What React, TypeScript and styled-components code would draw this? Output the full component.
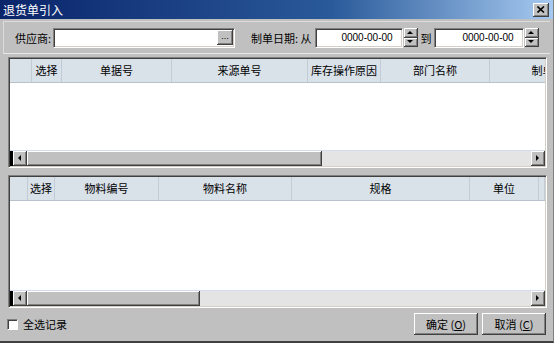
import React from 'react';
import styled, { createGlobalStyle } from 'styled-components';

const GlobalStyle = createGlobalStyle`
  html, body { margin: 0; padding: 0; background: #c0c0c0; }
  body { font-family: "Noto Sans CJK SC", "Noto Sans", sans-serif; font-size: 11px; color: #000; }
  * { box-sizing: border-box; }
`;

const Window = styled.div`
  width: 554px;
  height: 343px;
  background: #c0c0c0;
  display: flex;
  flex-direction: column;
  border-bottom: 2px solid #404040;
  border-right: 1px solid #808080;
  overflow: hidden;
`;

const TitleBar = styled.div`
  height: 19px;
  flex: none;
  display: flex;
  align-items: center;
  background: linear-gradient(to right, #0a246a 0%, #2a5a9a 60%, #a6caf0 100%);
  padding: 0 4px 0 3px;
`;

const TitleText = styled.span`
  color: #fff;
  font-size: 12px;
  line-height: 19px;
`;

const CloseBtn = styled.div`
  margin-left: auto;
  width: 16px;
  height: 14px;
  background: #c0c0c0;
  box-shadow: inset -1px -1px 0 #404040, inset 1px 1px 0 #fff, inset -2px -2px 0 #808080;
  display: flex;
  align-items: center;
  justify-content: center;
`;

const Toolbar = styled.div`
  margin: 2px 3px 0 3px;
  height: 33px;
  flex: none;
  display: flex;
  align-items: center;
  padding-left: 11px;
  border-top: 1px solid #dcdcdc;
  border-left: 1px solid #dcdcdc;
  border-bottom: 1px solid #e8e8e8;
`;

const Label = styled.span<{ $ml?: number; $mr?: number }>`
  margin-left: ${p => p.$ml ?? 0}px;
  margin-right: ${p => p.$mr ?? 2}px;
  white-space: nowrap;
  color: #000;
`;

const Field = styled.div<{ $w: number }>`
  width: ${p => p.$w}px;
  height: 20px;
  flex: none;
  background: #fff;
  border-top: 1px solid #808080;
  border-left: 1px solid #808080;
  border-right: 1px solid #fff;
  border-bottom: 1px solid #fff;
  box-shadow: inset 1px 1px 0 #404040, inset -1px -1px 0 #d4d0c8;
  display: flex;
  align-items: center;
  justify-content: flex-end;
  padding: 1px 1px 1px 2px;
`;

const DateText = styled.span`
  font-family: "Liberation Sans", Arial, sans-serif;
  font-size: 10px;
  padding-right: 8px;
`;

const EllipsisBtn = styled.div`
  width: 16px;
  height: 15px;
  background: #c0c0c0;
  box-shadow: inset -1px -1px 0 #404040, inset 1px 1px 0 #fff, inset -2px -2px 0 #808080;
  font-family: "Liberation Sans", Arial, sans-serif;
  font-size: 9px;
  line-height: 12px;
  text-align: center;
  color: #000;
`;

const Spinner = styled.div`
  width: 14px;
  height: 19px;
  margin-left: 1px;
  flex: none;
  display: flex;
  flex-direction: column;
`;

const SpinHalf = styled.div`
  flex: 1;
  background: #c0c0c0;
  box-shadow: inset -1px -1px 0 #404040, inset 1px 1px 0 #fff, inset -2px -2px 0 #808080;
  display: flex;
  align-items: center;
  justify-content: center;
`;

const Grid = styled.div<{ $h: number; $mt: number }>`
  margin: ${p => p.$mt}px 6px 0 8px;
  height: ${p => p.$h}px;
  flex: none;
  border-top: 1px solid #808080;
  border-left: 1px solid #808080;
  border-right: 1px solid #fff;
  border-bottom: 1px solid #fff;
  box-shadow: inset 1px 1px 0 #404040, inset -1px -1px 0 #d4d0c8;
  padding: 1px;
  display: flex;
  flex-direction: column;
  overflow: hidden;
`;

const HeaderRow = styled.div`
  height: 24px;
  flex: none;
  display: flex;
  background: #d9e1e9;
  border-bottom: 1px solid #b8c2cc;
  overflow: hidden;
`;

const HeaderCell = styled.div<{ $w?: number }>`
  ${p => (p.$w ? `width: ${p.$w}px; flex: none;` : 'flex: 1;')}
  border-right: 1px solid #c2ccd6;
  display: flex;
  align-items: center;
  justify-content: center;
  padding-bottom: 2px;
  white-space: nowrap;
  overflow: hidden;
  color: #000;
`;

const GridBody = styled.div`
  flex: 1;
  background: #fff;
  border-bottom: 1px solid #d6daf0;
`;

const ScrollRow = styled.div`
  height: 15px;
  flex: none;
  display: flex;
  background: #e6e6e6;
`;

const ScrollCorner = styled.div`
  width: 3px;
  background: #000;
`;

const ArrowBtn = styled.div`
  width: 14px;
  height: 15px;
  flex: none;
  background: #c0c0c0;
  box-shadow: inset -1px -1px 0 #404040, inset 1px 1px 0 #fff, inset -2px -2px 0 #808080;
  display: flex;
  align-items: center;
  justify-content: center;
`;

const Thumb = styled.div`
  height: 15px;
  flex: none;
  background: #c0c0c0;
  box-shadow: inset -1px -1px 0 #404040, inset 1px 1px 0 #fff, inset -2px -2px 0 #808080;
`;

const Track = styled.div`
  flex: 1;
  background-color: #e4e4e4;
`;

const Footer = styled.div`
  flex: 1;
  display: flex;
  align-items: flex-start;
  padding: 0 7px 0 7px;
`;

const CheckRow = styled.label`
  display: flex;
  align-items: center;
  margin-top: 8px;
  gap: 5px;
`;

const CheckBox = styled.span`
  width: 11px;
  height: 11px;
  background: #fff;
  border-top: 1px solid #808080;
  border-left: 1px solid #808080;
  border-right: 1px solid #fff;
  border-bottom: 1px solid #fff;
  box-shadow: inset 1px 1px 0 #404040;
`;

const Buttons = styled.div`
  margin-left: auto;
  margin-top: 5px;
  display: flex;
  gap: 4px;
`;

const Button = styled.button`
  width: 64px;
  height: 22px;
  background: #c0c0c0;
  border: none;
  padding: 0;
  box-shadow: inset -1px -1px 0 #404040, inset 1px 1px 0 #fff, inset -2px -2px 0 #808080;
  font-family: "Noto Sans CJK SC", sans-serif;
  font-size: 11px;
  color: #000;
`;

const Arrow = ({ dir, size = 3 }: { dir: 'up' | 'down' | 'left' | 'right'; size?: number }) => {
  const s = size;
  const pts: Record<string, string> = {
    up: `0,${s} ${s},0 ${2 * s},${s}`,
    down: `0,0 ${2 * s},0 ${s},${s}`,
    left: `${s},0 ${s},${2 * s} 0,${s}`,
    right: `0,0 0,${2 * s} ${s},${s}`,
  };
  const vertical = dir === 'up' || dir === 'down';
  return (
    <svg width={vertical ? 2 * s + 1 : s + 1} height={vertical ? s + 1 : 2 * s + 1}>
      <polygon points={pts[dir]} fill="#000" />
    </svg>
  );
};

type Col = { label: string; w?: number };

const DataGrid = ({ cols, h, mt, thumb }: { cols: Col[]; h: number; mt: number; thumb: number }) => (
  <Grid $h={h} $mt={mt}>
    <HeaderRow>
      {cols.map((c, i) => (
        <HeaderCell key={i} $w={c.w}>{c.label}</HeaderCell>
      ))}
    </HeaderRow>
    <GridBody />
    <ScrollRow>
      <ScrollCorner />
      <ArrowBtn><Arrow dir="left" /></ArrowBtn>
      <Thumb style={{ width: thumb }} />
      <Track />
      <ArrowBtn><Arrow dir="right" /></ArrowBtn>
    </ScrollRow>
  </Grid>
);

const cols1: Col[] = [
  { label: '', w: 22 },
  { label: '选择', w: 30 },
  { label: '单据号', w: 110 },
  { label: '来源单号', w: 136 },
  { label: '库存操作原因', w: 73 },
  { label: '部门名称', w: 109 },
  { label: '制单日期', w: 128 },
];

const cols2: Col[] = [
  { label: '', w: 18 },
  { label: '选择', w: 27 },
  { label: '物料编号', w: 104 },
  { label: '物料名称', w: 133 },
  { label: '规格', w: 178 },
  { label: '单位', w: 69 },
  { label: '' },
];

export default function App() {
  return (
    <>
      <GlobalStyle />
      <Window>
        <TitleBar>
          <TitleText>退货单引入</TitleText>
          <CloseBtn>
            <svg width="8" height="7" viewBox="0 0 8 7">
              <path d="M0.5 0.5 L7 6.5 M7 0.5 L0.5 6.5" stroke="#000" strokeWidth="1.6" />
            </svg>
          </CloseBtn>
        </TitleBar>
        <Toolbar>
          <Label>供应商:</Label>
          <Field $w={182}>
            <EllipsisBtn>...</EllipsisBtn>
          </Field>
          <Label $ml={16} $mr={3}>制单日期: 从</Label>
          <Field $w={88}>
            <DateText>0000-00-00</DateText>
          </Field>
          <Spinner>
            <SpinHalf><Arrow dir="up" size={3} /></SpinHalf>
            <SpinHalf><Arrow dir="down" size={3} /></SpinHalf>
          </Spinner>
          <Label $ml={3}>到</Label>
          <Field $w={90}>
            <DateText>0000-00-00</DateText>
          </Field>
          <Spinner>
            <SpinHalf><Arrow dir="up" size={3} /></SpinHalf>
            <SpinHalf><Arrow dir="down" size={3} /></SpinHalf>
          </Spinner>
        </Toolbar>
        <DataGrid cols={cols1} h={111} mt={3} thumb={295} />
        <DataGrid cols={cols2} h={133} mt={7} thumb={173} />
        <Footer>
          <CheckRow>
            <CheckBox />
            <span>全选记录</span>
          </CheckRow>
          <Buttons>
            <Button>确定 (<u>O</u>)</Button>
            <Button>取消 (<u>C</u>)</Button>
          </Buttons>
        </Footer>
      </Window>
    </>
  );
}
